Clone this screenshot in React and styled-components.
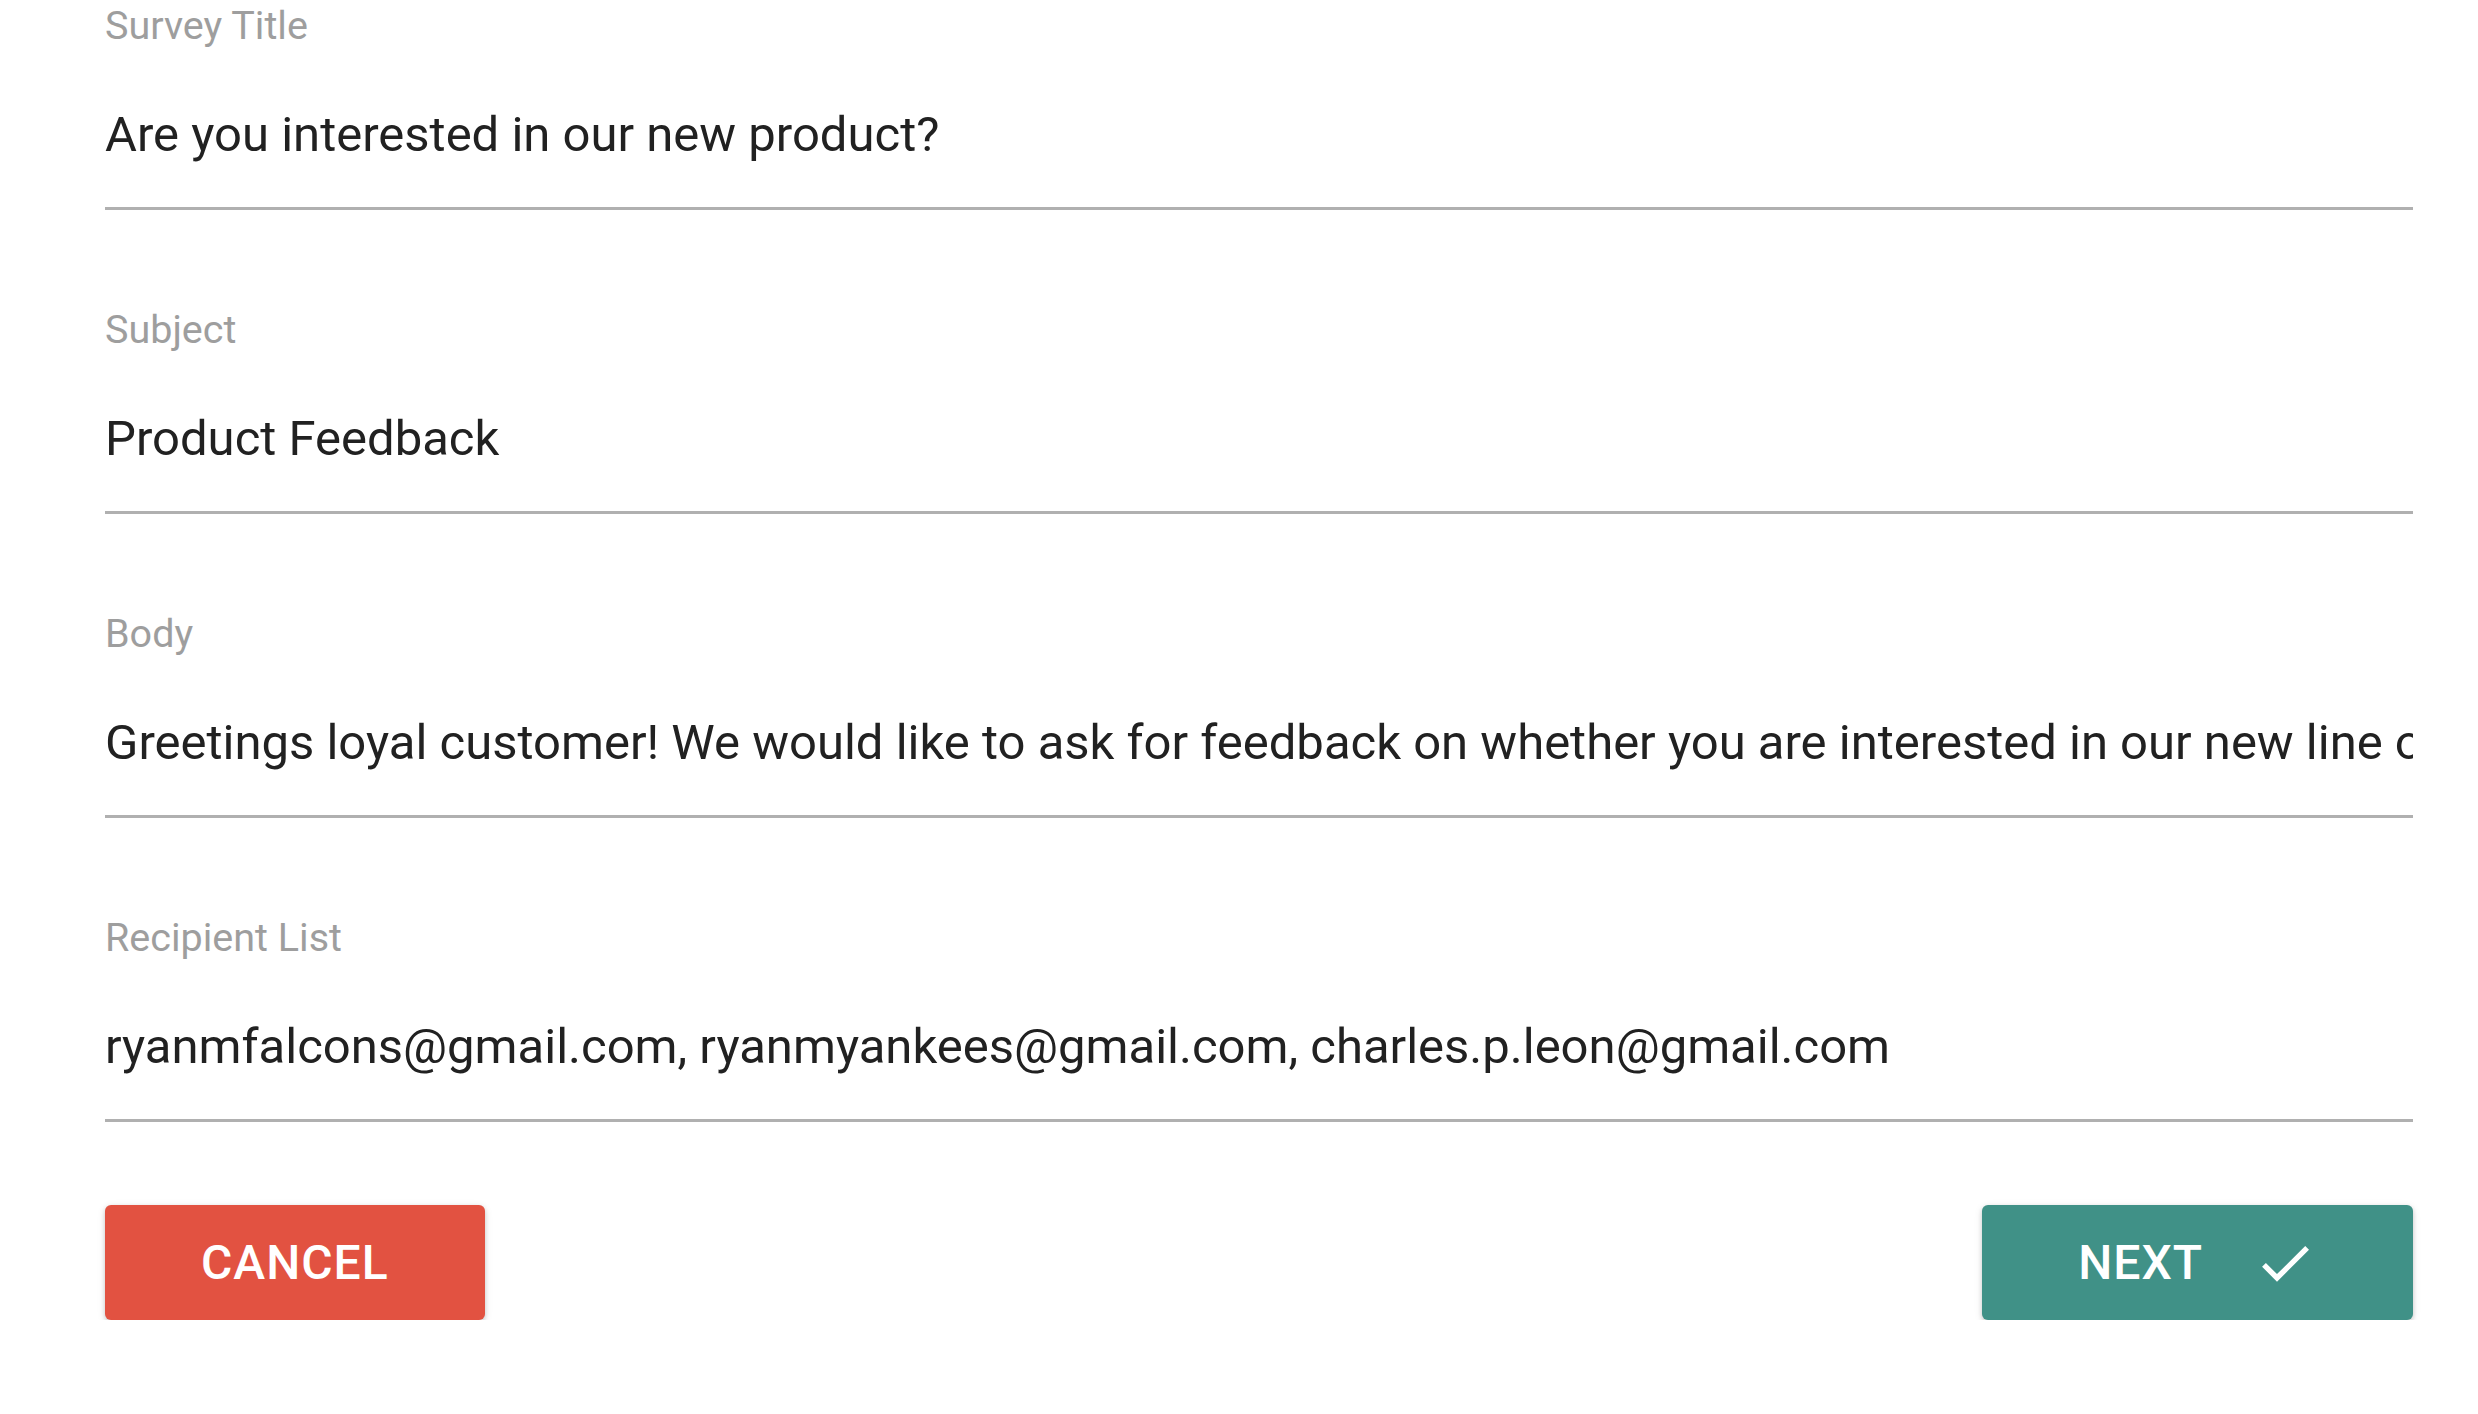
import React from 'react'
import styled, { createGlobalStyle } from 'styled-components'

const GlobalStyle = createGlobalStyle`
  html, body {
    margin: 0;
    padding: 0;
    background: #ffffff;
  }
  body {
    font-family: Roboto, "Liberation Sans", Arial, sans-serif;
  }
`

const Form = styled.form`
  display: flex;
  flex-direction: column;
  padding: 3px 65px 0 105px;
`

const Field = styled.div`
  display: flex;
  flex-direction: column;
  margin-bottom: 97px;
`

const Label = styled.label`
  font-size: 39.5px;
  line-height: 46px;
  color: #9e9e9e;
  margin-bottom: 50px;
`

const Input = styled.input`
  display: block;
  width: 100%;
  box-sizing: border-box;
  height: 111px;
  padding: 0 0 38px 0;
  margin: 0;
  border: none;
  border-bottom: 3px solid #b0b0b0;
  outline: none;
  background: transparent;
  font-family: Roboto, "Liberation Sans", Arial, sans-serif;
  font-size: 49px;
  line-height: 70px;
  color: #212121;
`

const Actions = styled.div`
  display: flex;
  justify-content: space-between;
  align-items: center;
  margin-top: -14px;
`

const Button = styled.button`
  display: flex;
  align-items: center;
  justify-content: center;
  height: 115px;
  padding: 0 96px;
  border: none;
  border-radius: 6px;
  background-color: ${p => p.$color};
  color: #ffffff;
  font-family: Roboto, "Liberation Sans", Arial, sans-serif;
  font-size: 48px;
  font-weight: 500;
  letter-spacing: 1px;
  text-transform: uppercase;
  box-shadow: 0 2px 4px rgba(0, 0, 0, 0.16), 0 2px 8px rgba(0, 0, 0, 0.1);
  cursor: pointer;
`

const CheckIcon = styled.svg`
  width: 64px;
  height: 64px;
  margin-left: 50px;
  fill: #ffffff;
`

const fields = [
  { label: 'Survey Title', value: 'Are you interested in our new product?' },
  { label: 'Subject', value: 'Product Feedback' },
  {
    label: 'Body',
    value:
      'Greetings loyal customer! We would like to ask for feedback on whether you are interested in our new line of products.'
  },
  {
    label: 'Recipient List',
    value: 'ryanmfalcons@gmail.com, ryanmyankees@gmail.com, charles.p.leon@gmail.com'
  }
]

function App() {
  return (
    <>
      <GlobalStyle />
      <Form onSubmit={e => e.preventDefault()}>
        {fields.map(field => (
          <Field key={field.label}>
            <Label>{field.label}</Label>
            <Input type="text" readOnly defaultValue={field.value} />
          </Field>
        ))}
        <Actions>
          <Button type="button" $color="#e25241">Cancel</Button>
          <Button type="submit" $color="#409187">
            Next
            <CheckIcon viewBox="0 0 24 24">
              <path d="M9 16.17L4.83 12l-1.42 1.41L9 19 21 7l-1.41-1.41z" />
            </CheckIcon>
          </Button>
        </Actions>
      </Form>
    </>
  )
}

export default App
